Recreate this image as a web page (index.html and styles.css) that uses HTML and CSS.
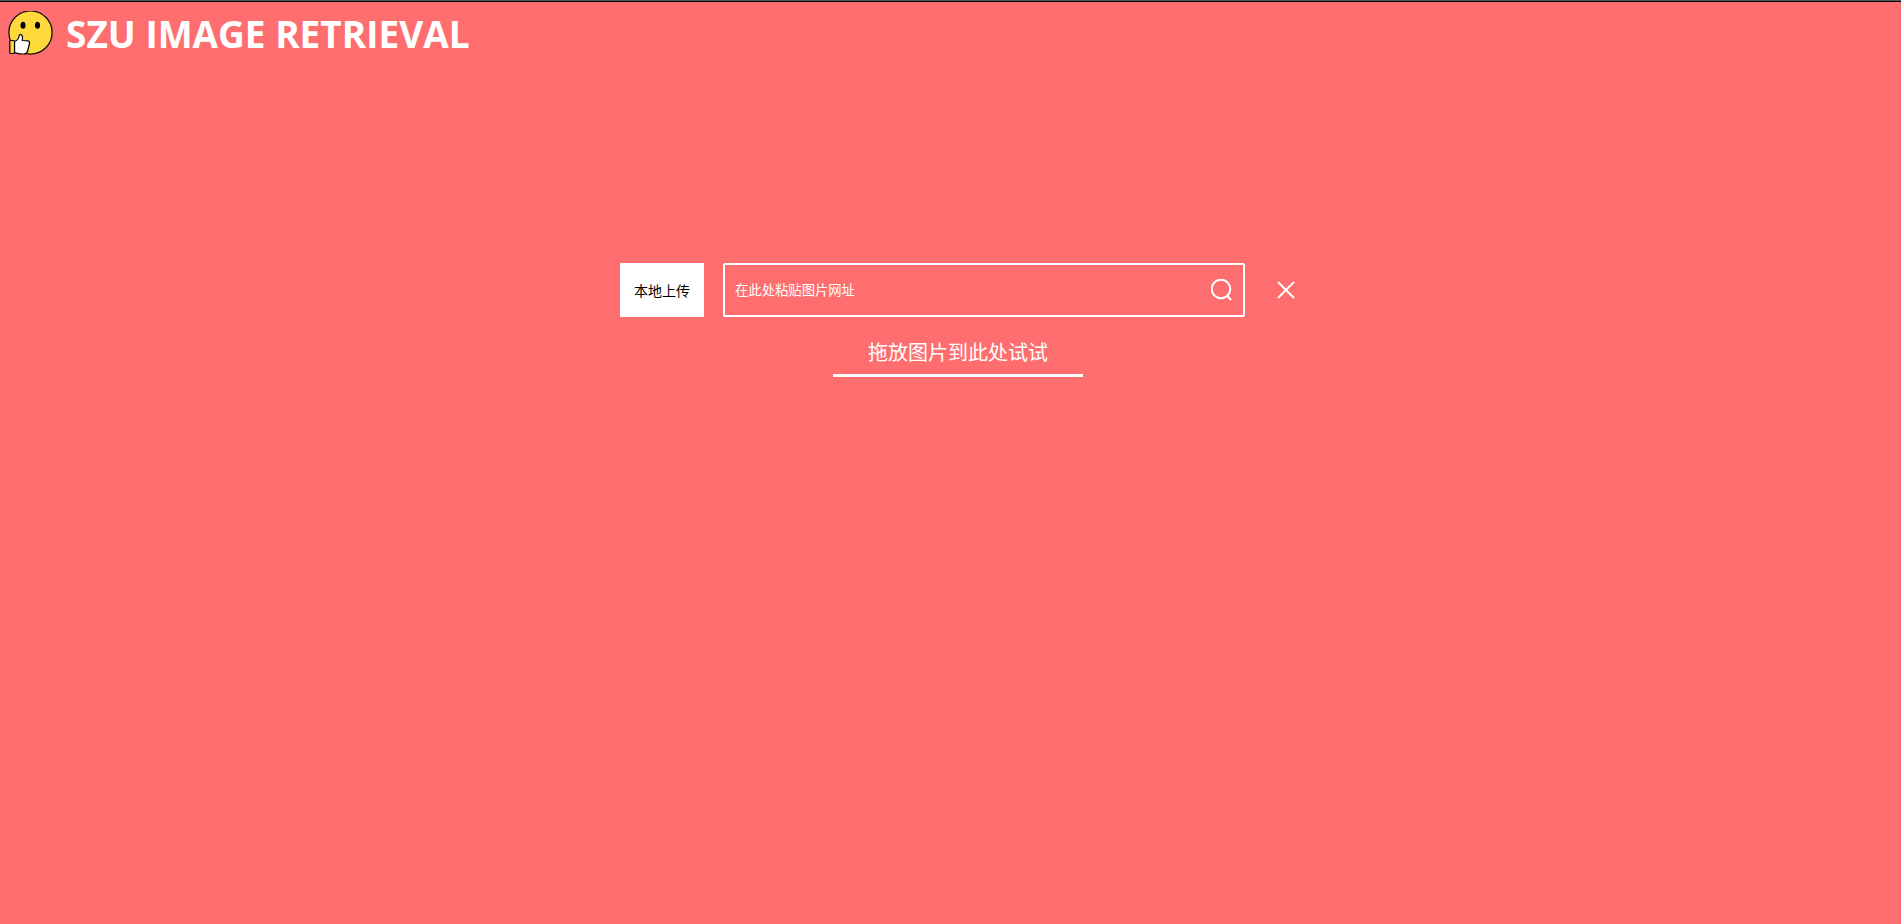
FILE: index.html
```html
<!DOCTYPE html>
<html lang="zh-CN">
<head>
<meta charset="utf-8">
<title>SZU IMAGE RETRIEVAL</title>
<link rel="stylesheet" href="styles.css">
</head>
<body>
<header class="header">
  <svg class="logo" viewBox="0 0 46 46" aria-hidden="true">
    <circle cx="23.5" cy="21.5" r="21.6" fill="#ffd93b" stroke="#111" stroke-width="1.3"/>
    <ellipse cx="16" cy="14.3" rx="2.5" ry="3.5" fill="#000"/>
    <ellipse cx="30.5" cy="14.3" rx="2.5" ry="3.5" fill="#000"/>
    <path d="M7.500 30.500 Q11.500 29 12 25.500 Q12.300 23.200 13.800 23.500 Q16.300 24.500 15.200 29.500 L21 29.800 Q23 30.500 22.500 32.500 L20.500 40.500 Q19.500 43 17 43 Q11 43.200 7.500 41.500 Z" fill="#fff" stroke="#000" stroke-width="1.200" stroke-linejoin="round"/>
    <rect x="2.800" y="29.500" width="4.700" height="13" rx="1" fill="#ffd93b" stroke="#000" stroke-width="1.200"/>
  </svg>
  <h1 class="title">SZU IMAGE RETRIEVAL</h1>
</header>
<main class="main">
  <form class="search-row">
    <button class="upload" type="button">本地上传</button>
    <div class="search-box">
      <input class="search-input" type="text" placeholder="在此处粘贴图片网址" aria-label="在此处粘贴图片网址">
      <button class="icon-button" type="button" aria-label="搜索">
        <svg class="search-icon" viewBox="0 0 22 22"><circle cx="10" cy="10" r="9.300"/><path d="M16 16.500 L20 21"/></svg>
      </button>
    </div>
    <button class="icon-button" type="button" aria-label="关闭">
      <svg class="close-icon" viewBox="0 0 20 20"><path d="M2 2 L18 18 M18 2 L2 18"/></svg>
    </button>
  </form>
  <p class="drop-hint">拖放图片到此处试试</p>
</main>
</body>
</html>
```
FILE: styles.css
```css
* { box-sizing: border-box; }
body {
  margin: 0;
  min-height: 100vh;
  background: #ff6e6e;
  border-top: 1px solid #555;
  color: #fff;
  font-family: "Open Sans", "Noto Sans CJK SC", sans-serif;
}
.header {
  display: flex;
  align-items: center;
  gap: 13px;
  height: 64px;
  padding: 0 7px;
  border-top: 1px solid #000;
}
.logo { width: 46px; height: 46px; }
.title { margin: 0; font-size: 37px; line-height: 52px; font-weight: 700; }
.main {
  display: flex;
  flex-direction: column;
  align-items: center;
  padding: 198px 0 0 15px;
}
.search-row { display: flex; align-items: center; }
.upload {
  height: 54px;
  padding: 0 14px;
  border: 0;
  background: #fff;
  color: #000;
  font-family: inherit;
  font-size: 14px;
}
.search-box {
  display: flex;
  align-items: center;
  width: 522px;
  height: 54px;
  margin: 0 31px 0 19px;
  padding: 0 10px;
  border: 2px solid #fff;
  border-radius: 2px;
}
.search-input {
  flex: 1;
  min-width: 0;
  padding: 0;
  border: 0;
  outline: 0;
  background: transparent;
  color: #fff;
  font-family: inherit;
}
.search-input::placeholder { color: #fff; opacity: 1; }
.icon-button {
  display: flex;
  padding: 0;
  border: 0;
  background: none;
  color: inherit;
  cursor: pointer;
}
.search-icon, .close-icon { fill: none; stroke: currentColor; stroke-width: 2; }
.search-icon { width: 22px; height: 22px; }
.close-icon { width: 20px; height: 20px; }
.drop-hint {
  width: 250px;
  margin: 21px 0 0;
  padding-bottom: 6px;
  border-bottom: 3px solid #fff;
  font-size: 20px;
  line-height: 30px;
  text-align: center;
}
```
